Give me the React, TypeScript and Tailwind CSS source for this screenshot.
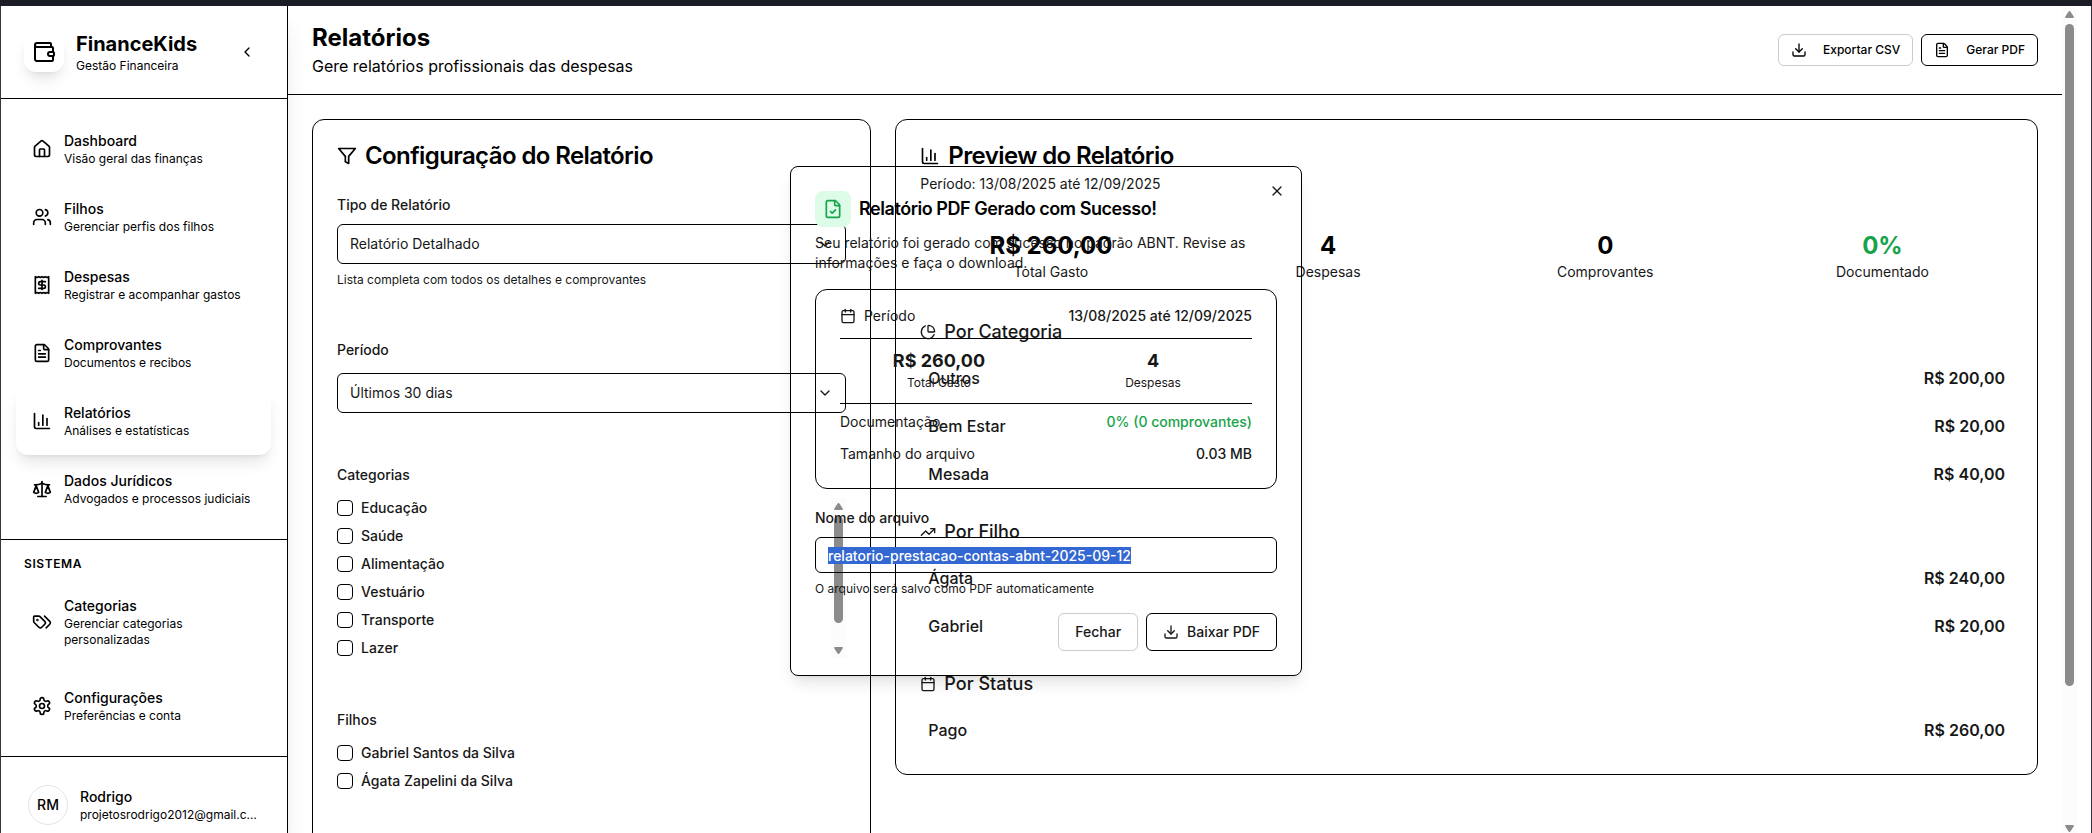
import { useEffect, useRef, useState } from "react";
import type { ComponentType, ReactNode } from "react";
import {
  Calendar,
  ChartColumn,
  ChartPie,
  ChevronDown,
  ChevronLeft,
  Download,
  FileCheck,
  FileText,
  House,
  Receipt,
  Scale,
  TrendingUp,
  Users,
  Wallet,
  X,
} from "lucide-react";

type IconType = ComponentType<{ className?: string }>;
type NavEntry = { icon: IconType; title: string; text: string; active?: boolean };

function StrokeIcon({ className, children: shapes }: { className?: string; children: ReactNode }) {
  return (
    <svg
      className={className}
      viewBox="0 0 24 24"
      fill="none"
      stroke="currentColor"
      strokeWidth="2"
      strokeLinecap="round"
      strokeLinejoin="round"
      aria-hidden="true"
    >
      {shapes}
    </svg>
  );
}

function FilterIcon({ className }: { className?: string }) {
  return (
    <StrokeIcon className={className}>
      <polygon points="22 3 2 3 10 12.46 10 19 14 21 14 12.46 22 3" />
    </StrokeIcon>
  );
}

function TagsIcon({ className }: { className?: string }) {
  return (
    <StrokeIcon className={className}>
      <path d="m15 5 6.3 6.3a2.4 2.4 0 0 1 0 3.4L17 19" />
      <path d="M9.586 5.586A2 2 0 0 0 8.172 5H3a1 1 0 0 0-1 1v5.172a2 2 0 0 0 .586 1.414L8.29 18.29a2.426 2.426 0 0 0 3.42 0l3.58-3.58a2.426 2.426 0 0 0 0-3.42z" />
      <circle cx="6.5" cy="9.5" r=".5" fill="currentColor" />
    </StrokeIcon>
  );
}

function SettingsIcon({ className }: { className?: string }) {
  return (
    <StrokeIcon className={className}>
      <path d="M12.22 2h-.44a2 2 0 0 0-2 2v.18a2 2 0 0 1-1 1.73l-.43.25a2 2 0 0 1-2 0l-.15-.08a2 2 0 0 0-2.73.73l-.22.38a2 2 0 0 0 .73 2.73l.15.1a2 2 0 0 1 1 1.72v.51a2 2 0 0 1-1 1.74l-.15.09a2 2 0 0 0-.73 2.73l.22.38a2 2 0 0 0 2.73.73l.15-.08a2 2 0 0 1 2 0l.43.25a2 2 0 0 1 1 1.73V20a2 2 0 0 0 2 2h.44a2 2 0 0 0 2-2v-.18a2 2 0 0 1 1-1.73l.43-.25a2 2 0 0 1 2 0l.15.08a2 2 0 0 0 2.73-.73l.22-.39a2 2 0 0 0-.73-2.73l-.15-.08a2 2 0 0 1-1-1.74v-.5a2 2 0 0 1 1-1.74l.15-.09a2 2 0 0 0 .73-2.73l-.22-.38a2 2 0 0 0-2.73-.73l-.15.08a2 2 0 0 1-2 0l-.43-.25a2 2 0 0 1-1-1.73V4a2 2 0 0 0-2-2z" />
      <circle cx="12" cy="12" r="3" />
    </StrokeIcon>
  );
}

const mainNav: NavEntry[] = [
  { icon: House, title: "Dashboard", text: "Visão geral das finanças" },
  { icon: Users, title: "Filhos", text: "Gerenciar perfis dos filhos" },
  { icon: Receipt, title: "Despesas", text: "Registrar e acompanhar gastos" },
  { icon: FileText, title: "Comprovantes", text: "Documentos e recibos" },
  { icon: ChartColumn, title: "Relatórios", text: "Análises e estatísticas", active: true },
  { icon: Scale, title: "Dados Jurídicos", text: "Advogados e processos judiciais" },
];

const systemNav: NavEntry[] = [
  { icon: TagsIcon, title: "Categorias", text: "Gerenciar categorias personalizadas" },
  { icon: SettingsIcon, title: "Configurações", text: "Preferências e conta" },
];

const categories = ["Educação", "Saúde", "Alimentação", "Vestuário", "Transporte", "Lazer"];
const children = ["Gabriel Santos da Silva", "Ágata Zapelini da Silva"];

const stats = [
  { value: "R$ 260,00", label: "Total Gasto", color: "text-black" },
  { value: "4", label: "Despesas", color: "text-black" },
  { value: "0", label: "Comprovantes", color: "text-black" },
  { value: "0%", label: "Documentado", color: "text-[#16a34a]" },
];

const breakdowns: { icon: IconType; title: string; rows: [string, string][] }[] = [
  {
    icon: ChartPie,
    title: "Por Categoria",
    rows: [
      ["Outros", "R$ 200,00"],
      ["Bem Estar", "R$ 20,00"],
      ["Mesada", "R$ 40,00"],
    ],
  },
  {
    icon: TrendingUp,
    title: "Por Filho",
    rows: [
      ["Ágata", "R$ 240,00"],
      ["Gabriel", "R$ 20,00"],
    ],
  },
  { icon: Calendar, title: "Por Status", rows: [["Pago", "R$ 260,00"]] },
];

function NavItem({ icon: Icon, title, text, active }: NavEntry) {
  return (
    <a
      href="#"
      aria-current={active ? "page" : undefined}
      className={
        active
          ? "flex items-center gap-3 rounded-xl p-4 shadow-lg"
          : "flex items-center gap-3 rounded-xl p-4"
      }
    >
      <Icon className="size-5 shrink-0" />
      <span className="min-w-0 flex-1">
        <span className="block text-sm font-medium">{title}</span>
        <span className="block text-xs">{text}</span>
      </span>
    </a>
  );
}

function Sidebar() {
  return (
    <aside className="flex w-72 shrink-0 flex-col overflow-hidden border-r border-black text-black shadow-xl">
      <div className="flex items-center gap-3 border-b border-black p-6">
        <div className="flex size-10 shrink-0 items-center justify-center rounded-xl shadow-lg">
          <Wallet className="size-6" />
        </div>
        <div className="flex-1">
          <p className="text-xl font-bold">FinanceKids</p>
          <p className="text-xs">Gestão Financeira</p>
        </div>
        <button type="button" aria-label="Recolher menu" className="flex size-8 items-center justify-center">
          <ChevronLeft className="size-4" />
        </button>
      </div>
      <nav aria-label="Principal" className="border-b border-black p-4">
        {mainNav.map((item) => (
          <NavItem key={item.title} {...item} />
        ))}
      </nav>
      <nav aria-label="Sistema" className="flex flex-col gap-2 border-b border-black p-4">
        <h2 className="px-2 text-xs font-semibold tracking-wider uppercase">Sistema</h2>
        {systemNav.map((item) => (
          <NavItem key={item.title} {...item} />
        ))}
      </nav>
      <div className="p-4">
        <div className="flex items-center gap-3 p-3">
          <div className="flex size-10 shrink-0 items-center justify-center rounded-full border border-neutral-200 text-sm font-medium">
            RM
          </div>
          <div className="min-w-0 flex-1">
            <p className="text-sm font-medium">Rodrigo</p>
            <p className="truncate text-xs">projetosrodrigo2012@gmail.com</p>
          </div>
        </div>
      </div>
    </aside>
  );
}

function ScrollBar({ thumb }: { thumb: string }) {
  return (
    <div aria-hidden="true" className="flex w-[15px] shrink-0 flex-col items-center bg-[#fcfcfc] text-[#8b8b8b]">
      <svg className="h-[18px] w-[9px] shrink-0" viewBox="0 0 9 18" fill="currentColor">
        <path d="M4.5 5 Q5.2 5 5.6 5.7 L8.8 10.8 Q9.2 12 8 12 H1 Q-.2 12 .2 10.8 L3.4 5.7 Q3.8 5 4.5 5Z" />
      </svg>
      <div className="w-[9px] flex-1">
        <div className={thumb} />
      </div>
      <svg className="h-[18px] w-[9px] shrink-0" viewBox="0 0 9 18" fill="currentColor">
        <path d="M4.5 14 Q5.2 14 5.6 13.3 L8.8 8.2 Q9.2 7 8 7 H1 Q-.2 7 .2 8.2 L3.4 13.3 Q3.8 14 4.5 14Z" />
      </svg>
    </div>
  );
}

function FieldLabel({ htmlFor, text }: { htmlFor: string; text: string }) {
  return (
    <div>
      <label htmlFor={htmlFor} className="text-sm font-medium">
        {text}
      </label>
    </div>
  );
}

function SelectBox({ id, options }: { id: string; options: string[] }) {
  return (
    <div className="relative">
      <select
        id={id}
        className="block h-10 w-full appearance-none rounded-md border border-black bg-transparent px-3 text-sm text-neutral-900"
      >
        {options.map((option) => (
          <option key={option}>{option}</option>
        ))}
      </select>
      <ChevronDown className="pointer-events-none absolute top-3 right-[13px] size-4" />
    </div>
  );
}

function CheckRow({ id, label }: { id: string; label: string }) {
  return (
    <div className="flex h-5 items-center gap-2">
      <input id={id} type="checkbox" className="size-4 appearance-none rounded-sm border border-black checked:bg-black" />
      <label htmlFor={id} className="text-sm font-medium">
        {label}
      </label>
    </div>
  );
}

function Spacer() {
  return <div className="h-px" />;
}

function ConfigCard() {
  return (
    <section className="rounded-xl border border-black p-6 text-neutral-900">
      <h2 className="flex items-center gap-2 text-2xl leading-6 font-semibold tracking-tight text-black">
        <FilterIcon className="size-5 shrink-0" />
        Configuração do Relatório
      </h2>
      <div className="mt-6 flex flex-col gap-6">
        <div className="flex flex-col gap-2">
          <FieldLabel htmlFor="tipo" text="Tipo de Relatório" />
          <SelectBox id="tipo" options={["Relatório Detalhado", "Relatório Resumido"]} />
          <p className="text-xs">Lista completa com todos os detalhes e comprovantes</p>
        </div>
        <Spacer />
        <div className="flex flex-col gap-3">
          <FieldLabel htmlFor="periodo" text="Período" />
          <SelectBox id="periodo" options={["Últimos 30 dias", "Últimos 90 dias"]} />
        </div>
        <Spacer />
        <fieldset>
          <legend className="mb-3">
            <span className="text-sm font-medium">Categorias</span>
          </legend>
          <div className="flex">
            <div className="flex flex-1 flex-col gap-2">
              {categories.map((name) => (
                <CheckRow key={name} id={`cat-${name}`} label={name} />
              ))}
            </div>
            <ScrollBar thumb="h-[86%] rounded-full bg-[#8b8b8b]" />
          </div>
        </fieldset>
        <Spacer />
        <fieldset className="pb-40">
          <legend className="mb-3">
            <span className="text-sm font-medium">Filhos</span>
          </legend>
          <div className="flex flex-col gap-2">
            {children.map((name) => (
              <CheckRow key={name} id={`filho-${name}`} label={name} />
            ))}
          </div>
        </fieldset>
      </div>
    </section>
  );
}

function PreviewCard() {
  return (
    <section className="col-span-2 flex flex-col gap-6 self-start rounded-xl border border-black p-6 text-neutral-900">
      <div className="flex flex-col gap-[6px]">
        <h2 className="flex items-center gap-2 text-2xl leading-6 font-semibold tracking-tight text-black">
          <ChartColumn className="size-5 shrink-0" />
          Preview do Relatório
        </h2>
        <p className="text-sm">Período: 13/08/2025 até 12/09/2025</p>
      </div>
      <div className="grid grid-cols-4 gap-4">
        {stats.map((stat) => (
          <div key={stat.label} className="py-3 text-center">
            <p className={`text-2xl font-bold ${stat.color}`}>{stat.value}</p>
            <p className="text-sm">{stat.label}</p>
          </div>
        ))}
      </div>
      {breakdowns.map(({ icon: Icon, title, rows }) => (
        <div key={title}>
          <h3 className="flex items-center gap-2 text-lg font-medium">
            <Icon className="size-4" />
            {title}
          </h3>
          <dl className="mt-3 flex flex-col gap-2">
            {rows.map(([name, value]) => (
              <div key={name} className="flex justify-between p-2">
                <dt className="font-medium">{name}</dt>
                <dd className="font-semibold">{value}</dd>
              </div>
            ))}
          </dl>
        </div>
      ))}
    </section>
  );
}

function SummaryRow({ label, children: value }: { label: ReactNode; children: ReactNode }) {
  return (
    <div className="flex items-center justify-between text-sm">
      <span className="flex items-center gap-2">{label}</span>
      <span className="font-medium">{value}</span>
    </div>
  );
}

function SuccessDialog({ onClose }: { onClose: () => void }) {
  const fileName = useRef<HTMLInputElement>(null);

  useEffect(() => {
    fileName.current?.focus();
    fileName.current?.select();
  }, []);

  return (
    <div className="absolute inset-0 z-10 flex items-center justify-center">
      <div
        role="dialog"
        aria-labelledby="dialog-title"
        className="relative flex w-full max-w-lg flex-col gap-4 rounded-lg border border-black p-6 text-neutral-900 shadow-lg"
      >
        <div className="flex flex-col gap-[6px]">
          <h2 id="dialog-title" className="flex items-center gap-2 text-lg font-semibold tracking-tight text-black">
            <span className="rounded-lg bg-[#dcfce7] p-2 text-[#16a34a]">
              <FileCheck className="size-5" />
            </span>
            Relatório PDF Gerado com Sucesso!
          </h2>
          <p className="text-sm">
            Seu relatório foi gerado com sucesso no padrão ABNT. Revise as informações e faça o download.
          </p>
        </div>
        <div className="flex flex-col gap-3 rounded-xl border border-black px-6 pt-4 pb-6">
          <SummaryRow
            label={
              <>
                <Calendar className="size-4" />
                Período
              </>
            }
          >
            13/08/2025 até 12/09/2025
          </SummaryRow>
          <div className="grid grid-cols-2 gap-4 border-t border-black pt-2 text-center">
            <div>
              <p className="text-lg font-bold">R$ 260,00</p>
              <p className="text-xs">Total Gasto</p>
            </div>
            <div>
              <p className="text-lg font-bold">4</p>
              <p className="text-xs">Despesas</p>
            </div>
          </div>
          <div className="flex flex-col gap-3 border-t border-black pt-2">
            <SummaryRow label="Documentação">
              <span className="text-[#16a34a]">0% (0 comprovantes)</span>
            </SummaryRow>
            <SummaryRow label="Tamanho do arquivo">0.03 MB</SummaryRow>
          </div>
        </div>
        <div className="flex flex-col gap-2">
          <FieldLabel htmlFor="arquivo" text="Nome do arquivo" />
          <input
            ref={fileName}
            id="arquivo"
            type="text"
            defaultValue="relatorio-prestacao-contas-abnt-2025-09-12"
            className="h-9 w-full rounded-md border border-black bg-transparent px-3 text-sm font-medium outline-none selection:bg-[#3367d1] selection:text-white"
          />
          <p className="text-xs">O arquivo será salvo como PDF automaticamente</p>
        </div>
        <div className="flex justify-end gap-2 text-sm font-medium">
          <button type="button" onClick={onClose} className="rounded-md border border-[#cccccc] px-4 py-2">
            Fechar
          </button>
          <button type="button" className="flex items-center gap-2 rounded-md border border-black px-4 py-2">
            <Download className="size-4" />
            Baixar PDF
          </button>
        </div>
        <button type="button" aria-label="Fechar janela" onClick={onClose} className="absolute top-4 right-4">
          <X className="size-4" />
        </button>
      </div>
    </div>
  );
}

export default function App() {
  const [open, setOpen] = useState(true);

  return (
    <div className="flex h-screen flex-col overflow-hidden bg-white font-['Inter',sans-serif]">
      <div className="h-[6px] shrink-0 bg-[#1a1c26]" />
      <div className="relative flex h-[calc(100vh-3px)] shrink-0">
        <Sidebar />
        <div className="flex min-w-0 flex-1 pr-[15px]">
          <div className="flex min-w-0 flex-1 flex-col overflow-hidden">
            <header className="flex shrink-0 items-center justify-between border-b border-black px-6 py-4 text-black">
              <div>
                <h1 className="text-2xl font-bold">Relatórios</h1>
                <p>Gere relatórios profissionais das despesas</p>
              </div>
              <div className="flex gap-2 text-xs font-medium">
                <button type="button" className="flex h-8 items-center gap-4 rounded-md border border-[#cccccc] px-3">
                  <Download className="size-4" />
                  Exportar CSV
                </button>
                <button type="button" className="flex h-8 items-center gap-4 rounded-md border border-black px-3">
                  <FileText className="size-4" />
                  Gerar PDF
                </button>
              </div>
            </header>
            <main className="grid shrink-0 grid-cols-3 gap-6 p-6">
              <ConfigCard />
              <PreviewCard />
            </main>
          </div>
          <ScrollBar thumb="h-5/6 rounded-full bg-[#8b8b8b]" />
        </div>
        {open && <SuccessDialog onClose={() => setOpen(false)} />}
        <div className="pointer-events-none absolute inset-0 border-x border-[#33353f]" />
      </div>
    </div>
  );
}
